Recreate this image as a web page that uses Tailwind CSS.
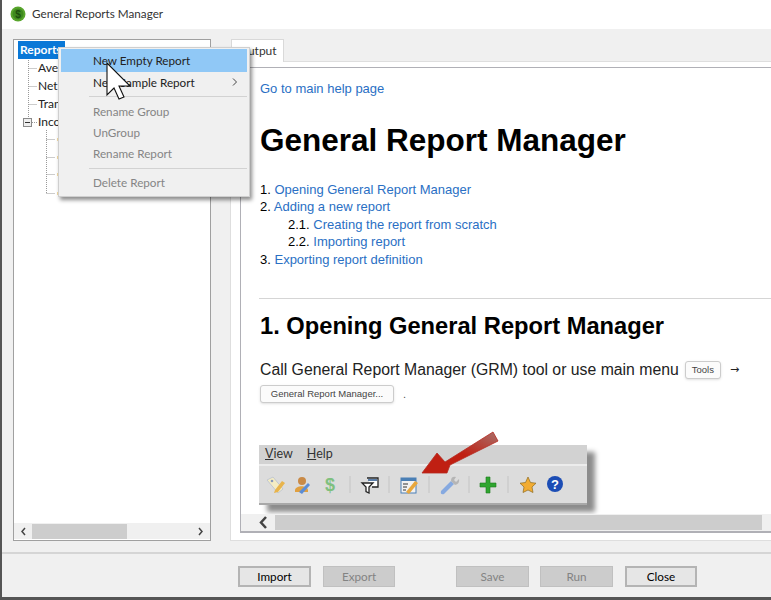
<!DOCTYPE html>
<html><head><meta charset="utf-8"><script src="https://cdn.jsdelivr.net/npm/@tailwindcss/browser@4"></script></head>
<body class="m-0 overflow-hidden">
<div class="relative w-[771px] h-[600px] overflow-hidden bg-[#f0f0f0] border-l-2 border-b-[3px] border-[#555] font-['Lato','Noto_Sans',sans-serif] text-[11.700px] text-[#222] flex flex-col">
  <!-- title -->
  <div class="h-[29px] bg-white flex items-center pl-[8px] pb-[1px] gap-[6px] shrink-0">
    <svg width="16" height="16" viewBox="0 0 16 16"><circle cx="8" cy="8" r="7.5" fill="#58a52c"/><circle cx="8" cy="8" r="5.5" fill="#3f8a1f"/><text x="8" y="11.5" text-anchor="middle" font-size="10" font-weight="700" fill="#1d4d0e" font-family="Liberation Sans">$</text></svg>
    <span class="text-[#333]">General Reports Manager</span>
  </div>
  <!-- main -->
  <div class="flex flex-1 min-h-0 pt-[10px] pl-[11px]">
    <!-- tree -->
    <div class="w-[198px] h-[502px] border border-[#a0a0a0] bg-white flex flex-col shrink-0">
      <div class="flex-1 pl-[4px] pt-[1px] text-[12px] leading-[18px] relative">
        <span class="block bg-[#0a78d7] text-white font-bold px-[2px] w-[47px] h-[18px]">Reports</span>
        <div class="pl-[20px]"><div>Average</div><div>Net Worth</div><div>Transactions</div><div>Income</div></div>
        <svg class="absolute left-0 top-0" width="60" height="160" fill="none" stroke="#999" stroke-dasharray="1 1">
          <path d="M14.500 20V78M14.500 28.500H23M14.500 46.500H23M14.500 64.500H23M18 82.500H23M32.500 90V153M32.500 99.500H41M32.500 117.500H41M32.500 134.500H41M32.500 153.500H41"/>
          <rect x="9.500" y="78.500" width="8" height="8" fill="#eee" stroke="#8a8a8a" stroke-dasharray="none"/><path d="M11 82.500H16" stroke-dasharray="none" stroke="#333"/>
          <path d="M43.500 99.500H45M43.500 117.500H45M43.500 134.500H45M43.500 153.500H45" stroke="#e8b84a" stroke-width="3" stroke-dasharray="none"/>
        </svg>
      </div>
      <div class="h-[16px] mb-[1px] bg-[#f0f0f0] flex items-center px-[6px] shrink-0">
        <svg width="7" height="9" viewBox="0 0 7 9" fill="none" stroke="#444" stroke-width="1.500"><path d="M5 1L2 4.500L5 8"/></svg>
        <div class="ml-[5px] w-[95px] h-[15px] bg-[#cdcdcd]"></div>
        <svg class="ml-auto" width="7" height="9" viewBox="0 0 7 9" fill="none" stroke="#444" stroke-width="1.500"><path d="M2 1L5 4.500L2 8"/></svg>
      </div>
    </div>
    <!-- right -->
    <div class="ml-[19px] flex-1 flex flex-col min-w-0">
      <div class="w-[53px] h-[23px] ml-[1px] bg-white border border-b-0 border-[#d9d9d9] text-[12px] leading-[22px] text-center text-[#333] relative">Output</div>
      <div class="-mt-[1px] h-[480px] bg-white border-t border-l border-b border-[#dedede] pl-[9px] pt-[5px]">
        <div class="h-[466px] border-l border-t border-b-2 border-[#b0b0b6] flex flex-col">
          <div class="flex-1 overflow-hidden pl-[19px] text-[14px] text-black font-['Liberation_Sans',sans-serif]">
            <a class="block mt-[13px] leading-[16px] text-[13px] text-[#2a6fc4]">Go to main help page</a>
            <h1 class="mt-[25px] text-[31.500px] leading-[37px] font-bold">General Report Manager</h1>
            <ol class="mt-[21.500px] text-[13px] leading-[17.500px]">
              <li>1. <a class="text-[#2a6fc4]">Opening General Report Manager</a></li>
              <li>2. <a class="text-[#2a6fc4]">Adding a new report</a></li>
              <li class="pl-[28px]">2.1. <a class="text-[#2a6fc4]">Creating the report from scratch</a></li>
              <li class="pl-[28px]">2.2. <a class="text-[#2a6fc4]">Importing report</a></li>
              <li>3. <a class="text-[#2a6fc4]">Exporting report definition</a></li>
            </ol>
            <div class="mt-[29.500px] -ml-[1px] h-[1px] bg-[#d5d5d5]"></div>
            <h2 class="mt-[14px] text-[23.700px] leading-[27px] font-bold">1. Opening General Report Manager</h2>
            <div class="mt-[20px] flex items-center h-[21px] text-[15.800px] text-[#222] whitespace-nowrap">Call General Report Manager (GRM) tool or use main menu
              <span class="ml-[6px] h-[18px] px-[6px] border border-[#ccc] rounded-[3px] bg-[#fbfbfb] shadow-sm text-[9.500px] leading-[16px] text-[#444]">Tools</span>
              <span class="ml-[9px] text-[11px] font-['DejaVu_Sans']">→</span>
            </div>
            <div class="mt-[4px] flex items-center h-[19px]">
              <span class="h-[18px] w-[134px] text-center border border-[#ccc] rounded-[3px] bg-[#fbfbfb] shadow-sm text-[9.500px] leading-[16px] text-[#444]">General Report Manager...</span>
              <span class="ml-[9px] text-[11px] text-[#555]">.</span>
            </div>
            <!-- embedded screenshot -->
            <div class="mt-[41px] w-[328px] h-[60px] -ml-[1px] bg-[#dcdcdc] border-b-2 border-[#a8a8a8] shadow-[8px_7px_5px_#8c8c8c] flex flex-col text-[#333] font-['Lato',sans-serif]">
              <div class="h-[21px] bg-[#d2d2d2] pl-[6px] flex items-center gap-[14px] text-[12.500px] border-b-2 border-[#ececec] shrink-0"><span><u>V</u>iew</span><span><u>H</u>elp</span></div>
              <svg width="328" height="37" viewBox="0 0 328 37">
                <g transform="translate(7,10)"><path d="M1 4L7 1L17 13L12 17Z" fill="#f4ecc4" stroke="#b7c0d0" stroke-width=".8"/><circle cx="6" cy="5" r="1.300" fill="#89b"/><path d="M9 14L16 5L19 7L12 16L8 17Z" fill="#e8b44c"/></g>
                <g transform="translate(34,10)"><circle cx="9" cy="5" r="4" fill="#c98a46"/><path d="M2 14C3 9 14 9 15 14V16H2Z" fill="#e0a040"/><path d="M6 16L15 7L17 9L9 18Z" fill="#5b8dd6"/></g>
                <text x="71" y="25" font-size="18" font-weight="700" fill="#7fc07f" font-family="Liberation Sans" text-anchor="middle">$</text>
                <path d="M91 10V27M130 10V27M170 10V27M210 10V27M249 10V27" stroke="#c4c4c4"/>
                <g transform="translate(102,10)" fill="#fff" stroke="#222" stroke-width="1.300"><path d="M6 2H17V11H11"/><path d="M7 3H16V5H7Z" fill="#5b7ea8" stroke="none"/><path d="M1 7H12L8 11V17L5 15.500V11Z"/></g>
                <g transform="translate(141,10)"><rect x="1" y="2" width="15" height="15" fill="#f2f2f2" stroke="#4a7fb5"/><rect x="1" y="2" width="15" height="3" fill="#4a7fb5"/><path d="M3 8H8M3 11H7M3 14H6" stroke="#333"/><path d="M6 16L15 5L18 7L9 18Z" fill="#e8a73c"/></g>
                <g transform="translate(181,10)"><path d="M1 15L11 5L14 8L4 18Q0 19 1 15Z" fill="#86a9e0"/><path d="M11 5Q11 0 16 1L14 4L16 6L19 3Q20 8 15 9Z" fill="#b5b5b5"/></g>
                <path d="M221 17H227V11H231V17H237V21H231V27H227V21H221Z" fill="#2fa52f" stroke="#1d7a1d" stroke-width=".6"/>
                <path d="M269 11L271.500 16.500L277 17.200L273 21L274 26.500L269 24L264 26.500L265 21L261 17.200L266.500 16.500Z" fill="#f2ac32" stroke="#8c6a20" stroke-width=".7"/>
                <circle cx="296" cy="18" r="8" fill="#1c4db5"/><text x="296" y="23" text-anchor="middle" font-size="13" font-weight="700" fill="#fff" font-family="Liberation Sans">?</text>
              </svg>
            </div>
          </div>
          <div class="h-[17px] bg-[#f0f0f0] flex items-center shrink-0 pl-[16px]">
            <svg width="12" height="15" viewBox="0 0 12 15" fill="none" stroke="#444" stroke-width="2.500"><path d="M9 2L4 7.500L9 13"/></svg>
            <div class="ml-[6px] w-[487px] h-[15px] bg-[#cdcdcd]"></div>
          </div>
        </div>
      </div>
    </div>
  </div>
  <!-- footer -->
  <div class="h-[45px] shrink-0 border-t-2 border-[#d5d5d5] pt-[12px] pl-[236px] flex text-center leading-[19px]">
    <div class="w-[73px] h-[21px] border-2 border-[#b4b4b4] bg-[#e6e6e6] text-black leading-[17px]">Import</div>
    <div class="ml-[12px] w-[72px] h-[21px] border border-[#c0c0c0] bg-[#cccccc] text-[#838383]">Export</div>
    <div class="ml-[61px] w-[73px] h-[21px] border border-[#c0c0c0] bg-[#cccccc] text-[#838383]">Save</div>
    <div class="ml-[11px] w-[73px] h-[21px] border border-[#c0c0c0] bg-[#cccccc] text-[#838383]">Run</div>
    <div class="ml-[12px] w-[72px] h-[21px] border-2 border-[#b4b4b4] bg-[#e6e6e6] text-black leading-[17px]">Close</div>
  </div>
  <!-- red arrow overlay -->
  <svg class="absolute left-[418px] top-[430px]" width="84" height="48" viewBox="0 0 84 48"><defs><linearGradient id="r" x1="0" x2="1" y1="1" y2="0"><stop offset="0.500" stop-color="#c01f12"/><stop offset="1" stop-color="#a9706a"/></linearGradient></defs><path d="M2 43L17 23L25 32L73 2L78 11L30 35L27 43Z" fill="url(#r)" stroke="#b52a20" stroke-width=".8"/></svg>
  <!-- context menu -->
  <div class="absolute left-[56px] top-[47px] w-[192px] h-[150px] bg-[#f0f0f0] border border-[#cfcfcf] shadow-[2px_3px_4px_rgba(0,0,0,.45)] pt-[1px] px-[2px]">
    <div class="h-[23px] bg-[#90c8f6] pl-[32px] leading-[22px] text-[#222]">New Empty Report</div>
    <div class="h-[21px] pl-[32px] leading-[20px] text-[#222] relative">New Sample Report<svg class="absolute right-[9px] top-[6px]" width="6" height="8" viewBox="0 0 6 8" fill="none" stroke="#444"><path d="M1 .500L4.500 4L1 7.500"/></svg></div>
    <div class="h-[1px] ml-[28px] my-[3px] bg-[#d2d2d2]"></div>
    <div class="mt-[3px] pl-[32px] leading-[22px] text-[#858585]">Rename Group</div>
    <div class="pl-[32px] leading-[20px] text-[#858585]">UnGroup</div>
    <div class="pl-[32px] leading-[23px] text-[#858585]">Rename Report</div>
    <div class="h-[1px] ml-[28px] my-[3px] bg-[#d2d2d2]"></div>
    <div class="pl-[32px] leading-[21px] text-[#858585]">Delete Report</div>
  </div>
  <!-- cursor -->
  <svg class="absolute left-[104px] top-[62px]" width="28" height="40" viewBox="0 0 28 40"><path d="M1 1V33L8 26L13 37L18 35L13 24H24Z" fill="#fff" stroke="#111" stroke-width="1.100"/></svg>
</div>
</body></html>
